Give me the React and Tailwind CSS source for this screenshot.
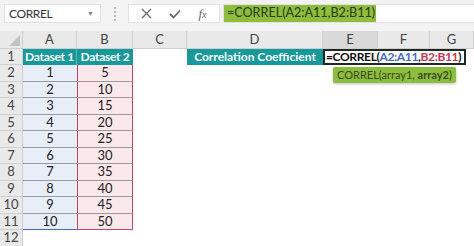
import React from "react";

const cols = [
  { l: "A", w: "w-[54px]" },
  { l: "B", w: "w-[56px]" },
  { l: "C", w: "w-[54px]" },
  { l: "D", w: "w-[136px]" },
  { l: "E", w: "w-[55px]" },
  { l: "F", w: "w-[52px]" },
  { l: "G", w: "flex-1" },
];

const data = [
  [1, 5],
  [2, 10],
  [3, 15],
  [4, 20],
  [5, 25],
  [6, 30],
  [7, 35],
  [8, 40],
  [9, 45],
  [10, 50],
];

function RowHead({ n }) {
  return (
    <div className="w-[23px] shrink-0 h-full bg-[#e9e9e9] border-r border-b border-[#cfcfcf] flex items-center justify-center text-[#444] text-[13px]">
      {n}
    </div>
  );
}

export default function App() {
  return (
    <div
      className="relative w-[474px] h-[246px] overflow-hidden bg-white"
      style={{ fontFamily: "Lato, 'Open Sans', sans-serif" }}
    >
      {/* toolbar */}
      <div className="h-[31px] bg-[#f3f3f3] flex items-start pt-[4px] pl-[4px]">
        <div className="w-[97px] h-[19px] bg-white border border-[#e2e2e2] flex items-center justify-between pl-[4px] pr-[6px]">
          <span className="text-[12px] tracking-[-0.4px] text-[#333]">CORREL</span>
          <span className="text-[7px] text-[#888]">▼</span>
        </div>
        <div className="w-[27px] h-[19px] flex flex-col items-center justify-center gap-[2px]">
          <span className="w-[2px] h-[2px] bg-[#bbb]" />
          <span className="w-[2px] h-[2px] bg-[#bbb]" />
          <span className="w-[2px] h-[2px] bg-[#bbb]" />
          <span className="w-[2px] h-[2px] bg-[#bbb]" />
        </div>
        <div className="w-[92px] h-[19px] bg-white border border-[#e2e2e2] flex items-center justify-around px-[4px]">
          <svg width="11" height="11" viewBox="0 0 11 11">
            <path d="M1 1 L10 10 M10 1 L1 10" stroke="#6a6a6a" strokeWidth="1.3" fill="none" />
          </svg>
          <svg width="12" height="10" viewBox="0 0 12 10">
            <path d="M1 5 L4.5 8.5 L11 1.5" stroke="#6a6a6a" strokeWidth="1.8" fill="none" />
          </svg>
          <span className="text-[13px] italic text-[#666]" style={{ fontFamily: "'Liberation Serif', serif" }}>
            f<span className="text-[10px]">x</span>
          </span>
        </div>
        <div className="ml-[3px] flex-1 h-[19px] bg-white border-y border-l border-[#e2e2e2] flex items-center">
          <span className="h-full w-[152px] bg-[#8cbd3b] flex items-center pl-[3px] text-[12.6px] text-[#2d3a1a] whitespace-nowrap">
            =CORREL(A2:A11,B2:B11)
          </span>
        </div>
      </div>

      {/* column header */}
      <div className="h-[17.5px] flex bg-[#e9e9e9]">
        <div className="w-[23px] shrink-0 h-full border-r border-b border-[#cfcfcf] relative">
          <svg className="absolute right-[2px] bottom-[2px]" width="11" height="11" viewBox="0 0 11 11">
            <path d="M11 0 L11 11 L0 11 Z" fill="#c3c3c3" />
          </svg>
        </div>
        {cols.map((c) => (
          <div
            key={c.l}
            className={`${c.w} ${c.l === "E" ? "bg-[#d9d9d9]" : ""} shrink-0 h-full border-r border-b border-[#cfcfcf] flex items-center justify-center text-[13px] text-[#444]`}
          >
            {c.l}
          </div>
        ))}
      </div>

      {/* row 1 */}
      <div className="h-[16.5px] flex">
        <RowHead n={1} />
        <div className="w-[54px] shrink-0 bg-[#16999a] text-white font-bold text-[12px] tracking-[-0.3px] whitespace-nowrap flex items-center justify-center border-r border-[#5fb8b8]">
          Dataset 1
        </div>
        <div className="w-[56px] shrink-0 bg-[#16999a] text-white font-bold text-[12px] tracking-[-0.3px] whitespace-nowrap flex items-center justify-center">
          Dataset 2
        </div>
        <div className="w-[54px] shrink-0" />
        <div className="w-[136px] shrink-0 bg-[#16999a] text-white font-bold text-[12px] whitespace-nowrap flex items-center justify-center">
          Correlation Coefficient
        </div>
        <div className="w-[143px] shrink-0 border-2 border-[#1d2a22] bg-white flex items-center pl-[1px] text-[12px] tracking-[-0.35px] font-bold text-[#111] whitespace-nowrap">
          <span>=CORREL(</span>
          <span className="text-[#3f6cbf]">A2:A11</span>
          <span>,</span>
          <span className="text-[#c0394f]">B2:B11</span>
          <span>)</span>
        </div>
      </div>

      {/* data rows */}
      {data.map(([a, b], i) => (
        <div key={i} className="h-[16.5px] flex">
          <RowHead n={i + 2} />
          <div
            className={`w-[54px] shrink-0 bg-[#e8eef8] flex items-center justify-center text-[13px] text-[#222] border-b ${
              i === 9 ? "border-[#3f6cbf]" : "border-[#9a9a9a]"
            }`}
          >
            {a}
          </div>
          <div
            className={`w-[56px] shrink-0 bg-[#fbe8ea] flex items-center justify-center text-[13px] text-[#222] border-x border-x-[#c8465f] border-b ${
              i === 9 ? "border-b-[#c8465f]" : "border-b-[#9a9a9a]"
            }`}
          >
            {b}
          </div>
        </div>
      ))}
      <div className="h-[16.5px] flex">
        <RowHead n={12} />
      </div>

      {/* tooltip */}
      <div className="absolute left-[333px] top-[67px] h-[16px] px-[4px] rounded-[2px] bg-[#8cbd3b] shadow-[0_1px_3px_rgba(0,0,0,0.25)] flex items-center text-[11px] text-[#3b4a22] whitespace-nowrap">
        <span className="whitespace-pre">CORREL(array1, </span>
        <span className="font-bold">array2</span>
        <span>)</span>
      </div>
    </div>
  );
}
